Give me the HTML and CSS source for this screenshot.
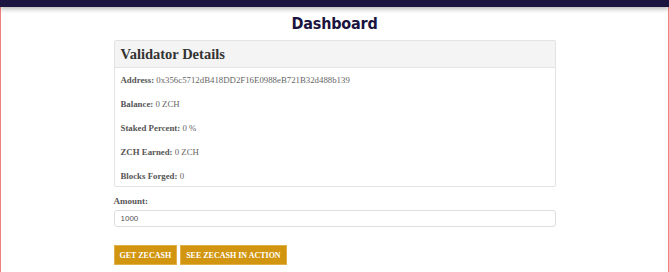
FILE: index.html
```html
<!DOCTYPE html>
<html lang="en">

<head>
  <meta charset="UTF-8">
  <meta name="viewport" content="width=device-width, initial-scale=1.0">
  <title>Dashboard</title>
  <link rel="stylesheet" href="styles.css">
</head>

<body>
  <div class="topbar"></div>

  <div class="page">
    <h1 class="title">Dashboard</h1>

    <div class="container">
      <div class="panel">
        <div class="panel-heading">
          <h2>Validator Details</h2>
        </div>
        <div class="panel-body">
          <p><b>Address:</b> 0x356c5712dB418DD2F16E0988eB721B32d488b139</p>
          <p><b>Balance:</b> 0 ZCH</p>
          <p><b>Staked Percent:</b> 0 %</p>
          <p><b>ZCH Earned:</b> 0 ZCH</p>
          <p><b>Blocks Forged:</b> 0</p>
        </div>
      </div>

      <label for="amount">Amount:</label>
      <input type="text" id="amount" value="1000">

      <div class="actions">
        <button class="btn">Get Zecash</button>
        <button class="btn">See Zecash in action</button>
      </div>
    </div>
  </div>
</body>

</html>
```

FILE: styles.css
```css
body {
  font-family: "Liberation Serif", serif;
  margin: 0;
  background: #fff;
}

.topbar {
  height: 7px;
  background-color: #1b1440;
  box-shadow: 0 2px 5px rgba(0, 0, 0, 0.3);
  position: relative;
}

.page {
  border-left: 1px solid #f08080;
  border-right: 1px solid #f08080;
  height: 265px;
  box-sizing: border-box;
  overflow: hidden;
}

.title {
  font-family: "DejaVu Sans Condensed", "DejaVu Sans", sans-serif;
  font-weight: bold;
  font-size: 16px;
  color: #1b1440;
  text-align: center;
  margin: 7px 0 6px;
  line-height: 20px;
  letter-spacing: -0.2px;
}

.container {
  width: 442px;
  margin: 0 auto;
}

.panel {
  border: 1px solid #e3e3e3;
  border-radius: 2px;
  margin-bottom: 8px;
}

.panel-heading {
  background-color: #f4f4f4;
  border-bottom: 1px solid #e3e3e3;
  padding: 5px 6px;
}

.panel-heading h2 {
  margin: 0;
  font-size: 14.5px;
  line-height: 16px;
  color: #333;
}

.panel-body {
  padding: 5px 6px 3px;
}

.panel-body p {
  margin: 0 0 10px;
  font-size: 8.8px;
  line-height: 14px;
  color: #666;
}

.panel-body p:last-child {
  margin-bottom: 0;
}

.panel-body b {
  color: #555;
}

label {
  display: block;
  font-weight: bold;
  font-size: 9px;
  line-height: 12px;
  color: #555;
  margin-bottom: 3px;
}

input {
  display: block;
  width: 100%;
  box-sizing: border-box;
  height: 17px;
  padding: 0 6px;
  border: 1px solid #ddd;
  border-radius: 3px;
  font-family: "Liberation Sans", Arial, sans-serif;
  font-size: 8px;
  color: #555;
}

.actions {
  margin-top: 18px;
  display: flex;
  gap: 3px;
}

.btn {
  background-color: #d2950f;
  color: #fff;
  border: 1px solid #e0b04a;
  font-family: "Liberation Serif", serif;
  font-weight: bold;
  font-size: 8px;
  text-transform: uppercase;
  height: 20px;
  padding: 0 5px;
  cursor: pointer;
}
```
